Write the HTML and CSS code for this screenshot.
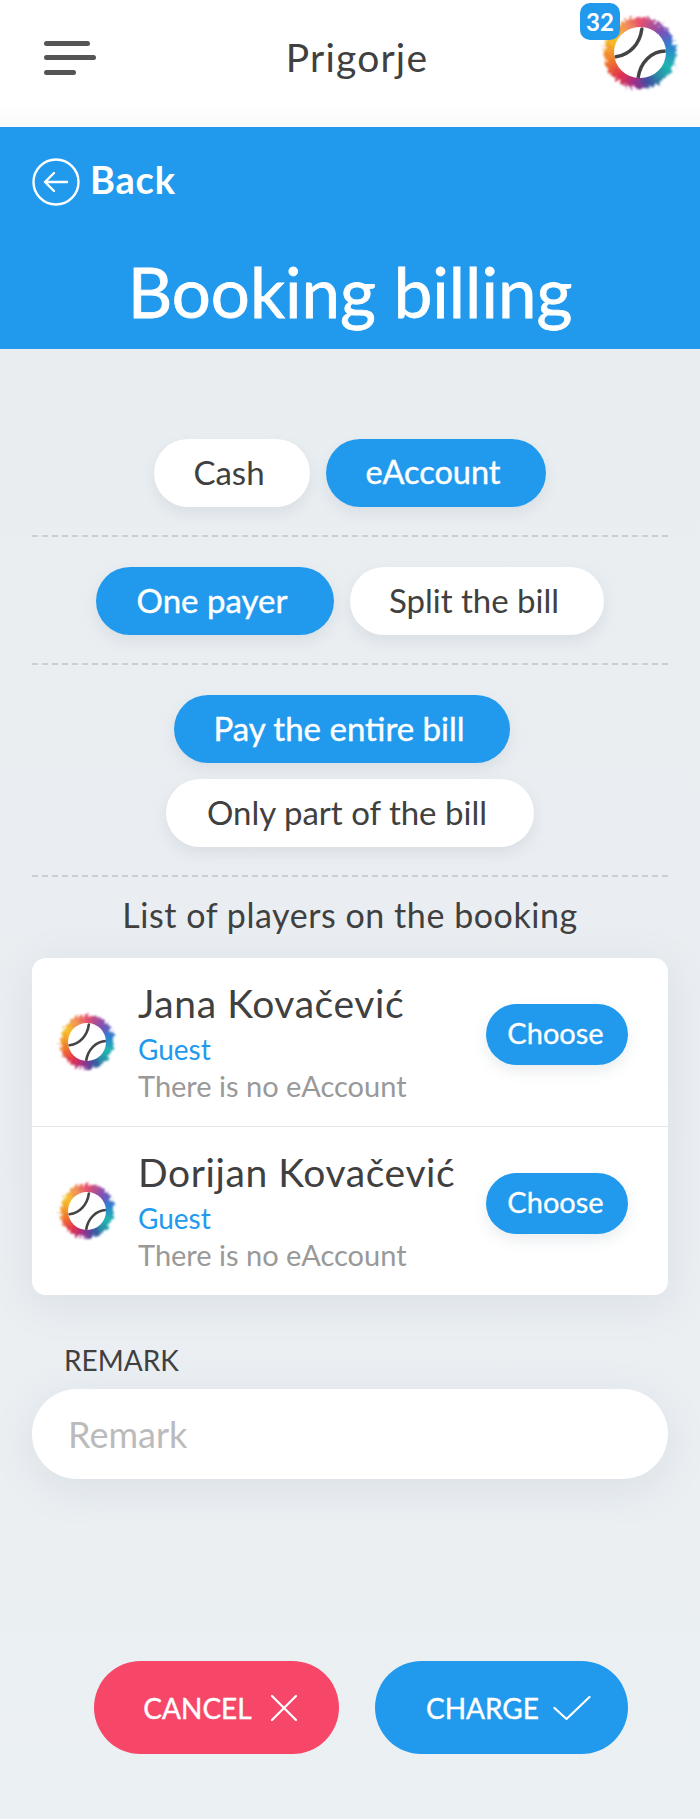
FILE: index.html
```html
<!DOCTYPE html>
<html lang="en">
<head>
    <meta charset="UTF-8">
    <meta name="viewport" content="width=device-width, initial-scale=1.0">
    <title>Booking billing</title>
    <link rel="stylesheet" href="styles.css">
</head>
<body>
    <svg class="defs" width="0" height="0">
        <defs>
            <filter id="rough" x="-20%" y="-20%" width="140%" height="140%">
                <feTurbulence type="fractalNoise" baseFrequency="0.28" numOctaves="2" seed="4"/>
                <feDisplacementMap in="SourceGraphic" scale="11" xChannelSelector="R" yChannelSelector="G"/>
                <feGaussianBlur stdDeviation="0.9"/>
            </filter>
            <symbol id="seams" viewBox="-27 -27 54 54">
                <path d="M-25 4C-10 2 0-10 2-25M27-2C12-2 0 10-2 27" fill="none" stroke="#444" stroke-width="3.6" stroke-linecap="round"/>
            </symbol>
        </defs>
    </svg>

    <header class="topbar">
        <button class="burger" aria-label="Menu"><span></span><span></span><span></span></button>
        <div class="club">Prigorje</div>
        <div class="ball ball-big">
            <div class="ball-ring"></div>
            <svg class="ball-face"><use href="#seams"/></svg>
            <span class="badge">32</span>
        </div>
    </header>

    <section class="hero">
        <a class="back" href="#">
            <svg width="48" height="48" viewBox="0 0 48 48" fill="none" stroke="#fff" stroke-width="2.4" stroke-linecap="round" stroke-linejoin="round">
                <circle cx="24" cy="24" r="22.5"/>
                <path d="M35 24H13M22 15l-9 9 9 9"/>
            </svg>
            <span class="back-text">Back</span>
        </a>
        <h1>Booking billing</h1>
    </section>

    <main class="content">
        <div class="option-row">
            <button class="pill cash">Cash</button>
            <button class="pill active eaccount">eAccount</button>
        </div>
        <div class="option-row">
            <button class="pill active one">One payer</button>
            <button class="pill split">Split the bill</button>
        </div>
        <div class="option-row stacked">
            <button class="pill active entire">Pay the entire bill</button>
            <button class="pill part">Only part of the bill</button>
        </div>

        <h2 class="list-title">List of players on the booking</h2>

        <div class="players">
            <div class="player">
                <div class="ball ball-small">
                    <div class="ball-ring"></div>
                    <svg class="ball-face"><use href="#seams"/></svg>
                </div>
                <div class="player-info">
                    <div class="player-name">Jana Kovačević</div>
                    <div class="player-role">Guest</div>
                    <div class="player-note">There is no eAccount</div>
                </div>
                <button class="choose">Choose</button>
            </div>
            <div class="player">
                <div class="ball ball-small">
                    <div class="ball-ring"></div>
                    <svg class="ball-face"><use href="#seams"/></svg>
                </div>
                <div class="player-info">
                    <div class="player-name">Dorijan Kovačević</div>
                    <div class="player-role">Guest</div>
                    <div class="player-note">There is no eAccount</div>
                </div>
                <button class="choose">Choose</button>
            </div>
        </div>

        <label class="remark-label" for="remark">REMARK</label>
        <input class="remark" type="text" id="remark" placeholder="Remark">
    </main>

    <footer class="actions">
        <button class="action cancel">
            CANCEL
            <svg width="28" height="28" viewBox="0 0 28 28" fill="none" stroke="#fff" stroke-width="2.2" stroke-linecap="round"><path d="M2 2l24 24M26 2L2 26"/></svg>
        </button>
        <button class="action charge">
            CHARGE
            <svg width="38" height="26" viewBox="0 0 38 26" fill="none" stroke="#fff" stroke-width="2.2" stroke-linecap="round" stroke-linejoin="round"><path d="M1.500 13l12 11L36.500 2"/></svg>
        </button>
    </footer>
</body>
</html>
```

FILE: styles.css
```css
* {
    box-sizing: border-box;
}

body {
    margin: 0;
    width: 700px;
    min-height: 1819px;
    font-family: Lato, "Noto Sans", sans-serif;
    color: #404040;
    background: linear-gradient(180deg, #e8edf0 0%, #eaeef2 60%, #ebf0f3 100%);
}

button {
    font-family: inherit;
    border: none;
    cursor: pointer;
}

.defs {
    position: absolute;
}

/* top bar */
.topbar {
    height: 127px;
    background: linear-gradient(180deg, #fff 82%, #f9fafa 100%);
    padding: 0 24px 0 44px;
    display: flex;
    align-items: center;
    justify-content: space-between;
}

.burger {
    width: 52px;
    height: 34px;
    margin-top: -12px;
    padding: 0;
    background: none;
    display: flex;
    flex-direction: column;
    justify-content: space-between;
}

.burger span {
    display: block;
    height: 5px;
    border-radius: 3px;
    background-color: #555;
    width: 46px;
}

.burger span:nth-child(2) {
    width: 52px;
}

.burger span:nth-child(3) {
    width: 32px;
}

.club {
    font-size: 39px;
    letter-spacing: 1.2px;
    margin-top: -14px;
    margin-left: 14px;
}

/* tennis ball logo */
.ball {
    position: relative;
    flex-shrink: 0;
}

.ball-big {
    width: 72px;
    height: 72px;
    margin-top: -22px;
}

.ball-small {
    width: 54px;
    height: 54px;
}

.ball-ring {
    width: 100%;
    height: 100%;
    border-radius: 50%;
    background: conic-gradient(#e8506f 0deg, #7c4fb5 45deg, #2f7fd0 75deg, #1fb6b0 115deg, #2a8fa8 140deg, #3e4fa0 165deg, #a02f8a 190deg, #e0304f 220deg, #f0792a 255deg, #f6c42c 300deg, #f08a5a 335deg, #e8506f 360deg);
    filter: url(#rough);
}

.ball-face {
    position: absolute;
    left: 14%;
    top: 14%;
    width: 72%;
    height: 72%;
    border-radius: 50%;
    background-color: #fff;
}

.badge {
    position: absolute;
    left: -24px;
    top: -14px;
    width: 40px;
    height: 37px;
    border-radius: 10px;
    background-color: #219aee;
    color: #fff;
    font-size: 24px;
    font-weight: 700;
    line-height: 37px;
    text-align: center;
}

/* blue title block */
.hero {
    height: 222px;
    background-color: #219aee;
    color: #fff;
    padding: 29px 32px 0;
}

.back {
    display: flex;
    align-items: center;
    gap: 10px;
    color: #fff;
    font-size: 38px;
    font-weight: 700;
    letter-spacing: 0.8px;
    text-decoration: none;
}

.back-text {
    margin-bottom: 5px;
}

.hero h1 {
    margin: 47px 0 0;
    font-size: 69px;
    font-weight: 400;
    line-height: 76px;
    text-align: center;
    -webkit-text-stroke: 0.8px #fff;
}

/* payment options */
.content {
    padding: 90px 32px 0;
}

.option-row {
    display: flex;
    justify-content: center;
    gap: 16px;
    padding-bottom: 28px;
    margin-bottom: 30px;
    border-bottom: 2px dashed #cbcfd3;
}

.option-row.stacked {
    flex-direction: column;
    align-items: center;
    margin-bottom: 0;
}

.pill {
    height: 68px;
    border-radius: 34px;
    background-color: #fff;
    color: #404040;
    font-size: 33px;
    padding: 0 6px 3px 0;
    box-shadow: 0 6px 14px rgba(120, 135, 150, 0.14);
}

.pill.active {
    background-color: #219aee;
    color: #fff;
    -webkit-text-stroke: 0.4px #fff;
}

.cash { width: 156px; }
.eaccount { width: 220px; font-size: 32.500px; }
.one { width: 238px; }
.split { width: 254px; }
.entire { width: 336px; margin-right: 16px; }
.part { width: 368px; }

.list-title {
    margin: 18px 0 23px;
    font-size: 34px;
    font-weight: 400;
    letter-spacing: 0.55px;
    line-height: 40px;
    text-align: center;
}

/* players card */
.players {
    background-color: #fff;
    border-radius: 14px;
    box-shadow: 0 8px 40px rgba(120, 135, 150, 0.14);
}

.player {
    display: flex;
    align-items: center;
    height: 168px;
    padding: 0 40px 0 28px;
}

.player + .player {
    height: 169px;
    border-top: 1px solid #e3e5e8;
}

.player-info {
    flex: 1;
    margin-left: 24px;
}

.player-name {
    font-size: 39px;
    letter-spacing: 0.6px;
    line-height: 44px;
}

.player-role {
    margin-top: 7px;
    font-size: 28px;
    line-height: 34px;
    color: #219aee;
}

.player-note {
    margin-top: 3px;
    font-size: 29px;
    line-height: 34px;
    color: #999;
}

.choose {
    width: 142px;
    height: 61px;
    margin-top: -16px;
    border-radius: 31px;
    background-color: #219aee;
    color: #fff;
    font-size: 29px;
    padding: 0 3px 3px 0;
    box-shadow: 0 6px 14px rgba(120, 135, 150, 0.16);
    -webkit-text-stroke: 0.3px #fff;
}

/* remark */
.remark-label {
    display: block;
    margin: 48px 0 12px 32px;
    font-size: 28px;
    line-height: 34px;
}

.remark {
    display: block;
    width: 100%;
    height: 90px;
    border: none;
    border-radius: 45px;
    background-color: #fff;
    padding: 0 36px;
    font-family: inherit;
    font-size: 36px;
    color: #404040;
    box-shadow: 0 10px 40px rgba(120, 135, 150, 0.14);
}

.remark::placeholder {
    color: #bbb;
}

/* bottom buttons */
.actions {
    display: flex;
    gap: 36px;
    padding: 0 0 0 94px;
    margin-top: 182px;
}

.action {
    height: 93px;
    border-radius: 47px;
    color: #fff;
    font-size: 28px;
    -webkit-text-stroke: 0.4px #fff;
    display: flex;
    align-items: center;
    justify-content: center;
    gap: 18px;
    padding: 0;
}

.cancel {
    width: 245px;
    padding-left: 8px;
    background-color: #f64769;
}

.charge {
    width: 253px;
    padding-left: 14px;
    gap: 14px;
    background-color: #219aee;
}
```
